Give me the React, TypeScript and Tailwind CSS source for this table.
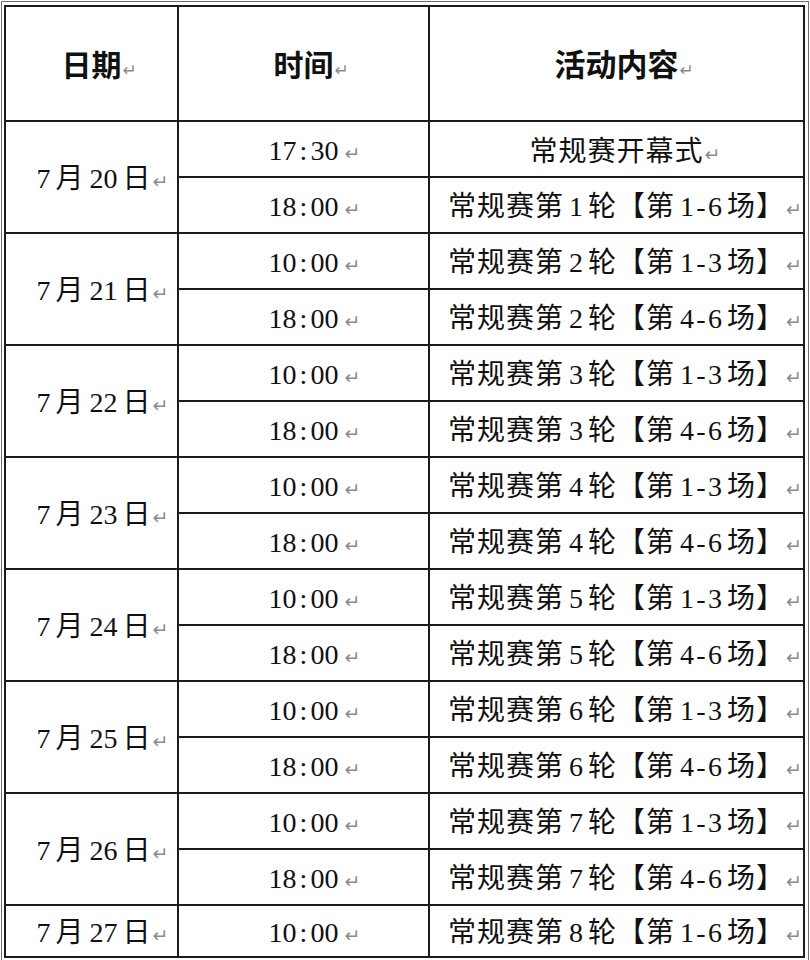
import React from "react";

type Block = {
  day: string;
  rows: { time: string; text: string }[];
};

const schedule: Block[] = [
  {
    day: "20",
    rows: [
      { time: "17:30", text: "常规赛开幕式" },
      { time: "18:00", text: "常规赛第1轮【第1-6场】" },
    ],
  },
  {
    day: "21",
    rows: [
      { time: "10:00", text: "常规赛第2轮【第1-3场】" },
      { time: "18:00", text: "常规赛第2轮【第4-6场】" },
    ],
  },
  {
    day: "22",
    rows: [
      { time: "10:00", text: "常规赛第3轮【第1-3场】" },
      { time: "18:00", text: "常规赛第3轮【第4-6场】" },
    ],
  },
  {
    day: "23",
    rows: [
      { time: "10:00", text: "常规赛第4轮【第1-3场】" },
      { time: "18:00", text: "常规赛第4轮【第4-6场】" },
    ],
  },
  {
    day: "24",
    rows: [
      { time: "10:00", text: "常规赛第5轮【第1-3场】" },
      { time: "18:00", text: "常规赛第5轮【第4-6场】" },
    ],
  },
  {
    day: "25",
    rows: [
      { time: "10:00", text: "常规赛第6轮【第1-3场】" },
      { time: "18:00", text: "常规赛第6轮【第4-6场】" },
    ],
  },
  {
    day: "26",
    rows: [
      { time: "10:00", text: "常规赛第7轮【第1-3场】" },
      { time: "18:00", text: "常规赛第7轮【第4-6场】" },
    ],
  },
  {
    day: "27",
    rows: [{ time: "10:00", text: "常规赛第8轮【第1-6场】" }],
  },
];

// Word paragraph mark, hangs after the centred text
function Mark({ small }: { small?: boolean }) {
  return (
    <span className="inline-block w-0 overflow-visible whitespace-nowrap">
      <span
        className={`ml-px font-['DejaVu_Sans'] font-normal text-[#8a8a8a] ${
          small ? "text-[17px]" : "text-[19px]"
        }`}
      >
        ↵
      </span>
    </span>
  );
}

// split into latin / CJK runs like Word's autospace does
function Mixed({ text }: { text: string }) {
  const runs = text.match(/[0-9:\-]+|[^0-9:\-]+/g) ?? [];
  return (
    <>
      {runs.map((run, i) => {
        const latin = /^[0-9:\-]/.test(run);
        if (latin) {
          return (
            <span key={i} className="mx-[5px] font-['Liberation_Serif'] tracking-normal">
              {run.split("").map((ch, j) =>
                ch === ":" || ch === "-" ? (
                  <span key={j} className="inline-block w-[14px] text-center">
                    {ch}
                  </span>
                ) : (
                  <span key={j}>{ch}</span>
                )
              )}
            </span>
          );
        }
        return (
          <span key={i} className="tracking-[1px] whitespace-pre">
            {run}
          </span>
        );
      })}
    </>
  );
}

const cell =
  "flex items-center justify-center border-r-2 border-b-2 border-[#1c1c1c] whitespace-nowrap";

export default function App() {
  return (
    <div className="w-[810px] h-[960px] overflow-hidden bg-white pt-px text-[#111] font-['Noto_Sans_CJK_SC',sans-serif]">
      <div className="ml-px w-[808px] h-[959px] border-l border-t border-r border-[#707070] pl-[2px] pt-[3px]">
        <div className="grid grid-cols-[173px_251px_375px] grid-rows-[115px_repeat(14,56px)_52px] border-l-2 border-t-2 border-[#1c1c1c] w-[801px]">
          <div className={`${cell} text-[30px] font-bold`}>
            <span>
              日期
              <Mark small />
            </span>
          </div>
          <div className={`${cell} text-[30px] font-bold`}>
            <span>
              时间
              <Mark small />
            </span>
          </div>
          <div className={`${cell} text-[31px] font-bold`}>
            <span>
              活动内容
              <Mark small />
            </span>
          </div>

          {schedule.map((block) => (
            <React.Fragment key={block.day}>
              <div
                className={`${cell} text-[28px] ${
                  block.rows.length === 2 ? "row-span-2" : ""
                }`}
              >
                <span>
                  <Mixed text={`7月${block.day}日`} />
                  <Mark />
                </span>
              </div>
              {block.rows.map((row, i) => (
                <React.Fragment key={i}>
                  <div className={`${cell} text-[28px]`}>
                    <span>
                      <Mixed text={row.time} />
                      <Mark />
                    </span>
                  </div>
                  <div className={`${cell} text-[28px]`}>
                    <span>
                      <Mixed text={row.text} />
                      <Mark />
                    </span>
                  </div>
                </React.Fragment>
              ))}
            </React.Fragment>
          ))}
        </div>
      </div>
    </div>
  );
}
